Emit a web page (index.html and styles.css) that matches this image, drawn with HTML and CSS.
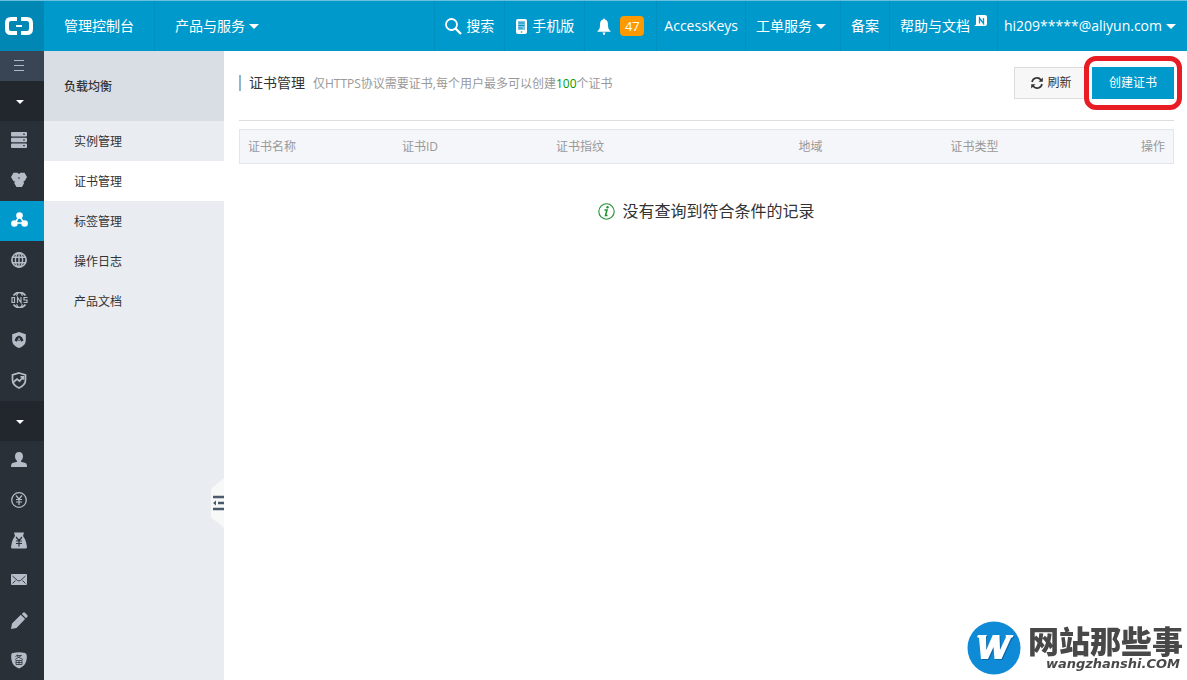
FILE: index.html
```html
<!DOCTYPE html>
<html lang="zh-CN">
<head>
<meta charset="utf-8">
<meta name="viewport" content="width=device-width, initial-scale=1">
<title>证书管理</title>
<link rel="stylesheet" href="styles.css">
</head>
<body>
<header class="topbar">
  <a class="brand" href="#" aria-label="首页">
    <svg width="28" height="18" viewBox="0 0 28 18" fill="none" stroke="#fff" stroke-width="4"><path d="M12 2H6Q2 2 2 6v6q0 4 4 4h6M16 2h6q4 0 4 4v6q0 4-4 4h-6"/><path d="M11 9h6" stroke-width="2"/></svg>
  </a>
  <nav class="nav nav-left">
    <a class="nav-item wide" href="#">管理控制台</a>
    <button class="nav-item wide plain" type="button">产品与服务<span class="caret"></span></button>
  </nav>
  <nav class="nav nav-right">
    <button class="nav-item" type="button"><svg class="gap-icon" width="17" height="17" viewBox="0 0 17 17" fill="none" stroke="#fff"><circle cx="6.500" cy="6.500" r="5.500" stroke-width="1.800"/><path d="M10.500 10.500l5.500 5.500" stroke-width="2.400"/></svg>搜索</button>
    <a class="nav-item" href="#"><svg class="gap-icon" width="13" height="15" viewBox="0 0 13 15"><rect x="1" width="11" height="15" rx="2" fill="#fff"/><rect x="3" y="2" width="7" height="9" fill="#7cc8e4"/><path d="M3.500 4h6M3.500 6.500h6M3.500 9h4" stroke="#0b8fbd" stroke-width="1"/><circle cx="6.500" cy="13" r=".8" fill="#09c"/></svg>手机版</a>
    <a class="nav-item bell" href="#" aria-label="消息"><svg width="14" height="17" viewBox="0 0 14 17" fill="#fff"><path d="M6 1.500a1 1 0 0 1 2 0C10.500 2 11 4.500 11 7c0 3.500.8 4.700 2.500 6v.8H.5V13C2.200 11.700 3 10.500 3 7c0-2.500.5-5 3-5.500zM5.500 14.500h3L7.500 17h-1z"/></svg><span class="count">47</span></a>
    <a class="nav-item keys" href="#">AccessKeys</a>
    <button class="nav-item tickets" type="button">工单服务<span class="caret"></span></button>
    <a class="nav-item" href="#">备案</a>
    <a class="nav-item" href="#">帮助与文档<svg class="new" width="13" height="12" viewBox="0 0 13 12"><path d="M3 0h8q2 0 2 2v7q0 2-2 2H0l2-1.500V1.500Q2 0 3 0z" fill="#fff"/><path d="M5.500 8.500V3l4 5.500V3" fill="none" stroke="#09c" stroke-width="1.300"/></svg></a>
    <button class="nav-item user" type="button">hi209*****@aliyun.com<span class="caret"></span></button>
  </nav>
</header>

<div class="layout">
  <nav class="rail" aria-label="产品">
    <button class="rail-toggle" type="button" aria-label="展开菜单"><svg width="10" height="11" viewBox="0 0 10 11"><path d="M0 .5h10M0 5.500h10M0 10.500h10" stroke="#aeb9c6" stroke-width="1"/></svg></button>
    <button class="rail-group" type="button" aria-label="产品"><span class="caret small"></span></button>
    <a class="rail-item" href="#" aria-label="服务器"><svg width="16" height="16" viewBox="0 0 16 16"><rect width="16" height="4.500" rx="1"/><rect y="5.700" width="16" height="4.500" rx="1"/><rect y="11.400" width="16" height="4.500" rx="1"/><path class="cut" d="M12 2.200h2M12 8h2M12 13.700h2"/></svg></a>
    <a class="rail-item" href="#" aria-label="数据库"><svg width="16" height="16" viewBox="0 0 16 16"><path d="M2.500.8h4L8 2l1.500-1.200h4L16 5l-2.300 4-1.200.3.500 2-2 3.700H5.500l-2.200-3.700.5-2L2.300 9 0 5z"/><circle class="hole" cx="8" cy="6" r=".8"/></svg></a>
    <a class="rail-item active" href="#" aria-label="负载均衡"><svg width="17" height="16" viewBox="0 0 17 16"><circle cx="8.500" cy="3.500" r="3.300"/><circle cx="3.400" cy="11.500" r="3.300"/><circle cx="13.600" cy="11.500" r="3.300"/><path class="line" d="M8.500 4L4 11h9z" stroke-width="1.500"/></svg></a>
    <a class="rail-item" href="#" aria-label="网络"><svg width="16" height="16" viewBox="0 0 16 16"><g class="line" stroke-width="1.700"><circle cx="8" cy="8" r="7.100"/><ellipse cx="8" cy="8" rx="3.600" ry="7.100" stroke-width="1.400"/><path d="M8 1v14M1.500 5.300h13M1.500 10.700h13" stroke-width="1.400"/></g></svg></a>
    <a class="rail-item" href="#" aria-label="域名解析"><svg width="17" height="16" viewBox="0 0 17 16"><g class="line"><path d="M2.500 3.500a7.300 7.300 0 0 1 12 0M2.500 12.500a7.300 7.300 0 0 0 12 0" stroke-width="1.700"/><path d="M5.500 3.800L7 1M11.500 3.800L10 1M5.500 12.200L7 15M11.500 12.200L10 15" stroke-width="1.200"/><path d="M1 5.500v5h2.500v-5zM6.500 11V5.500l3.500 5V5M16.500 5.500H13v2.500h3v2.500h-3.500" stroke-width="1.200"/></g></svg></a>
    <a class="rail-item" href="#" aria-label="云盾"><svg width="14" height="16" viewBox="0 0 14 16"><path d="M7 0l6.800 2.300V8c0 4-2.500 6.500-6.800 8C2.700 14.500.2 12 .2 8V2.300z"/><path class="hole" d="M2.500 8.500L4 5.300 7 3.500l3 1.800 1.500 3.200-2.300 1.300L7 5.500 4.800 9.800zM6.200 9l.8-2 .8 2z"/></svg></a>
    <a class="rail-item" href="#" aria-label="安全"><svg width="16" height="17" viewBox="0 0 16 17"><g class="line"><path d="M8 1l6.500 2v5q0 5-6.500 8Q1.500 13 1.500 8V3z" stroke-width="1.700"/><path d="M2 10.500l4-3.500 2.500 2L12.500 5M9.500 4.800h3v3" stroke-width="1.700"/></g></svg></a>
    <button class="rail-group" type="button" aria-label="用户中心"><span class="caret small"></span></button>
    <a class="rail-item" href="#" aria-label="账号"><svg width="16" height="16" viewBox="0 0 16 16"><path d="M8 0c2.700 0 4 1.700 4 4.300 0 2.200-.8 3.500-2 4.500v1l4.500 1.200Q16 11.500 16 15H0q0-3.500 1.500-4L6 9.800v-1C4.800 7.800 4 6.500 4 4.300 4 1.700 5.300 0 8 0z"/></svg></a>
    <a class="rail-item" href="#" aria-label="费用"><svg width="16" height="16" viewBox="0 0 16 16"><g class="line"><circle cx="8" cy="8" r="7.300" stroke-width="1.300"/><path d="M5 3.500L8 7l3-3.500M8 7v6M5 7.500h6M5 10h6" stroke-width="1.200"/></g></svg></a>
    <a class="rail-item" href="#" aria-label="续费"><svg width="16" height="17" viewBox="0 0 16 17"><path d="M3 .5h10L12 4q2 2.500 3 6l1 5q0 1.500-1.500 1.500h-13Q0 16.500 0 15l1-5q1-3.500 3-6z"/><path class="cut" d="M5 5l3 3.500L11 5M8 8.500v6M5 9h6M5 11.500h6" stroke-width="1.200"/></svg></a>
    <a class="rail-item" href="#" aria-label="邮件"><svg width="16" height="12" viewBox="0 0 16 12"><rect width="16" height="11" rx="1"/><path class="cut" d="M1.500 2l5 4.500q1.500 1 3 0l5-4.500M1.500 9.500l3-3M14.500 9.500l-3-3" stroke-width=".9"/></svg></a>
    <a class="rail-item" href="#" aria-label="工单"><svg width="17" height="17" viewBox="0 0 17 17"><path d="M0 17l1-5.500 8.800-8.700 4.300 4.300L5.500 16zM10.800 1.900L12 .8q1-.9 2 0L16.200 3q.9 1 0 2l-1.200 1.200z"/></svg></a>
    <a class="rail-item" href="#" aria-label="备案"><svg width="16" height="17" viewBox="0 0 16 17"><path d="M2 1Q8-.5 14 1q2 .5 1.800 4.500C15.500 12 12 15 8 16.500 4 15 .5 12 .2 5.500 0 1.500 1 1 2 1z"/><path class="cut" d="M6.500 2.500L4.500 5M6 3.500h4.500L4 7.500M6 4.500l6 3M5 8.500h6v4H5zM8 8.500v4M5 10.500h6" stroke-width=".8"/></svg></a>
  </nav>

  <aside class="side">
    <h2 class="side-title">负载均衡</h2>
    <ul class="menu">
      <li><a href="#">实例管理</a></li>
      <li><a class="current" href="#">证书管理</a></li>
      <li><a href="#">标签管理</a></li>
      <li><a href="#">操作日志</a></li>
      <li><a href="#">产品文档</a></li>
    </ul>
    <button class="collapse" type="button" aria-label="收起"><svg width="13" height="50" viewBox="0 0 13 50"><path d="M13 0v50L1 40Q0 39 0 38V12q0-1 1-2z" fill="#f7f8f8"/><path d="M2 19h11M7 25h6M2 31h11" stroke="#4b5a6a" stroke-width="2.500"/><path d="M2 25l3-2.500v5z" fill="#4b5a6a"/></svg></button>
  </aside>

  <main class="main">
    <div class="heading">
      <h1 class="title">证书管理</h1>
      <p class="hint">仅HTTPS协议需要证书,每个用户最多可以创建<span class="limit">100</span>个证书</p>
      <div class="actions">
        <button class="btn" type="button"><svg width="12" height="12" viewBox="0 0 12 12" fill="none" stroke="#333" stroke-width="1.600"><path d="M1 5a5 5 0 0 1 9-2M11 7a5 5 0 0 1-9 2"/><path d="M11.800.5v4.300H7.500zM.2 11.500V7.200h4.300z" fill="#333" stroke="none"/></svg>刷新</button>
        <span class="marked"><button class="btn primary" type="button">创建证书</button></span>
      </div>
    </div>
    <table class="certs">
      <colgroup><col class="c-name"><col class="c-id"><col class="c-print"><col class="c-region"><col class="c-type"><col></colgroup>
      <thead><tr><th>证书名称</th><th>证书ID</th><th>证书指纹</th><th>地域</th><th>证书类型</th><th class="end">操作</th></tr></thead>
    </table>
    <p class="empty"><svg width="17" height="17" viewBox="0 0 17 17"><circle cx="8.500" cy="8.500" r="7.700" fill="none" stroke="#1e9130" stroke-width="1.100"/><path d="M6.500 7h2.500L7.500 12.500h2" fill="none" stroke="#1e9130" stroke-width="1.500"/><circle cx="9.500" cy="4.300" r="1.200" fill="#1e9130"/></svg>没有查询到符合条件的记录</p>
  </main>
</div>

<div class="mark">
  <svg width="54" height="54" viewBox="0 0 54 54"><circle cx="27" cy="27" r="26.500" fill="#0f8ad6"/><path d="M12 15h9l-1 2 .3 13 6.500-15h6.700l.5 15 6-13-.5-2h8l-.5 2-2 1-9.500 21h-7l-1-12-5.500 12h-7l-2-21-2-1z" fill="#0a69a8"/><path d="M11 14h9l-1 2 .3 13 6.500-15h6.700l.5 15 6-13-.5-2h8l-.5 2-2 1-9.500 21h-7l-1-12-5.500 12h-7l-2-21-2-1z" fill="#fff"/></svg>
  <div class="mark-text"><span class="mark-name">网站那些事</span><span class="mark-url">wangzhanshi.COM</span></div>
</div>
</body>
</html>
```
FILE: styles.css
```css
* { box-sizing: border-box; }

body {
  margin: 0;
  min-height: 100vh;
  display: flex;
  flex-direction: column;
  background: #fff;
  color: #333;
  font: 12px/18px "Open Sans", "Noto Sans CJK SC", sans-serif;
  overflow: hidden;
}

button {
  font: inherit;
  color: inherit;
  border: 0;
  padding: 0;
  background: none;
  cursor: pointer;
}

a { color: inherit; text-decoration: none; }
h1, h2, p, ul { margin: 0; padding: 0; font-weight: 400; }
ul { list-style: none; }
svg { flex: none; display: block; }

.topbar {
  display: flex;
  height: 51px;
  background: #0099cc;
  border-top: 1px solid #69c0dc;
  color: #fff;
  font-size: 14px;
}

.brand {
  width: 44px;
  display: flex;
  align-items: center;
  padding-left: 5px;
  background: #0087b4;
}

.nav { display: flex; }
.nav-right { margin-left: auto; }

.nav-item {
  display: flex;
  align-items: center;
  padding: 0 10px;
  white-space: nowrap;
}

.nav-left .nav-item { border-right: 1px solid #008fbf; }
.nav-right .nav-item { border-left: 1px solid #008fbf; }
.nav-left .wide { padding: 0 20px; }
.nav-left .plain { border: 0; }
.nav-right .keys { padding: 0 7px; }
.nav-right .tickets { padding-right: 14px; }
.nav-right .user { padding: 0 11px 0 6px; }
.nav-right .bell { padding: 0 12px; gap: 9px; }
.gap-icon { margin-right: 4px; }

.caret {
  margin-left: 4px;
  border: 5px solid transparent;
  border-top-color: #fff;
  border-bottom: 0;
}

.caret.small { margin: 0; border-width: 4px 4px 0; }

.count {
  width: 24px;
  height: 20px;
  border-radius: 4px;
  background: #ff9900;
  line-height: 20px;
  font-size: 13px;
  text-align: center;
}

.new { margin: 0 0 10px 4px; }

.layout { display: flex; flex: 1; }

.rail {
  width: 44px;
  display: flex;
  flex-direction: column;
  background: #293038;
}

.rail-toggle, .rail-group, .rail-item {
  display: flex;
  align-items: center;
  justify-content: center;
  height: 40px;
  padding: 0 6px 2px 0;
  fill: #b4bdc7;
}

.rail-toggle { height: 30px; background: #394555; }
.rail-group { background: #22272e; padding: 2px 4px 0 0; }
.rail-item .line { fill: none; stroke: #b4bdc7; }
.rail-item .cut { fill: none; stroke: #293038; }
.rail-item .hole { fill: #293038; }
.rail-item.active { background: #0099cc; fill: #fff; }
.rail-item.active .line { stroke: #fff; }

.side {
  position: relative;
  width: 180px;
  background: #e9ecf1;
}

.side-title {
  padding: 2px 0 0 20px;
  background: #d9dde4;
  font-size: 12px;
  font-weight: 500;
  line-height: 68px;
}

.menu a { display: block; padding: 2px 0 0 30px; line-height: 38px; }
.menu .current { background: #fff; }

.collapse { position: absolute; right: 0; top: 427px; }

.main { flex: 1; padding: 0 13px 0 15px; }

.heading {
  display: flex;
  align-items: center;
  height: 70px;
  padding-bottom: 5px;
  border-bottom: 1px solid #dddddd;
}

.title {
  padding-left: 8px;
  border-left: 2px solid #88b7d0;
  font-size: 14px;
  line-height: 16px;
}

.hint { margin-left: 8px; padding-top: 2px; color: #999; }
.limit { color: #090; }

.actions { display: flex; gap: 8px; margin-left: auto; }

.btn {
  display: flex;
  align-items: center;
  justify-content: center;
  gap: 4px;
  width: 70px;
  height: 32px;
  padding-left: 4px;
  border: 1px solid #dddddd;
  border-right: 0;
  background: #f7f7f7;
}

.btn.primary { width: 82px; padding: 0; border: 0; background: #0099cc; color: #fff; }

.marked { position: relative; }

.marked::after {
  content: "";
  position: absolute;
  inset: -11px -8px;
  border: 5px solid #e81c24;
  border-radius: 12px;
  pointer-events: none;
}

.certs {
  width: 100%;
  margin-top: 8px;
  border: 1px solid #e1e6eb;
  border-spacing: 0;
  table-layout: fixed;
  background: #f5f6fa;
  color: #999;
}

.certs th { height: 33px; padding: 0 8px; font-weight: 400; text-align: left; }
.certs .end { text-align: right; }
.c-name, .c-id { width: 16.500%; }
.c-print { width: 26%; }
.c-region, .c-type { width: 16.300%; }

.empty {
  display: flex;
  align-items: center;
  justify-content: center;
  gap: 7px;
  margin-top: 35px;
  font-size: 16px;
  line-height: 24px;
}

.mark {
  position: fixed;
  right: 4px;
  bottom: 5px;
  display: flex;
  align-items: center;
  gap: 7px;
}

.mark-text {
  display: flex;
  flex-direction: column;
  align-items: flex-end;
  gap: 4px;
  color: #484848;
  white-space: nowrap;
}

.mark-name { font: 900 31px/28px "Noto Sans CJK SC", sans-serif; }
.mark-url { padding-right: 3px; font: italic 700 13px/12px "DejaVu Sans", sans-serif; }
```
